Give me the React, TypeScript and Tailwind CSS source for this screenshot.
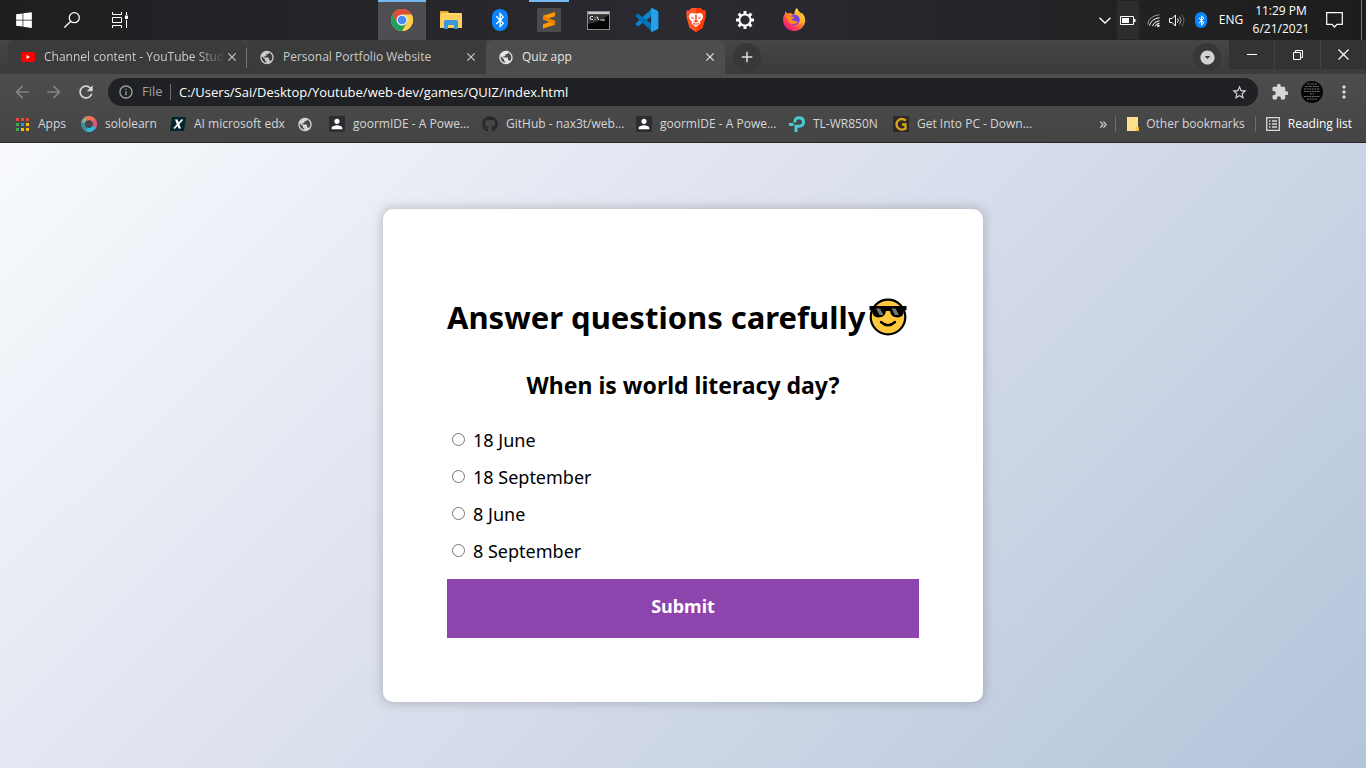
import type { ReactNode } from 'react';
import { FaBluetoothB, FaGithub, FaWindows } from 'react-icons/fa';
import {
  MdAdd,
  MdArrowBack,
  MdArrowDropDownCircle,
  MdArrowForward,
  MdClose,
  MdExtension,
  MdInfoOutline,
  MdMoreVert,
  MdPerson,
  MdPublic,
  MdRefresh,
  MdStarBorder,
} from 'react-icons/md';

const ChromeIcon = () => (
  <svg width="22" height="22" viewBox="0 0 48 48">
    <circle cx="24" cy="24" r="24" fill="#fbc116" />
    <path d="M24 24 L3.2 12 A24 24 0 0 1 44.8 12 Z" fill="#dd4b3e" />
    <path d="M24 12 H44.8 A24 24 0 0 1 24 48 L34.4 30 Z" fill="#fdd04a" />
    <path d="M3.2 12 A24 24 0 0 0 24 48 L34.4 30 L13.6 30 Z" fill="#1fa15d" />
    <path d="M3.2 12 L13.6 30 L24 24 V12 Z" fill="#dd4b3e" />
    <path d="M3.2 12 A24 24 0 0 0 1 30 L13.6 30 Z" fill="#1fa15d" />
    <circle cx="24" cy="24" r="12" fill="#f2f2f2" />
    <circle cx="24" cy="24" r="9.5" fill="#4c8bf5" />
  </svg>
);

const ExplorerIcon = () => (
  <svg width="22" height="20" viewBox="0 0 22 20">
    <path d="M0 1h8l1 2h13v5H0z" fill="#e9a928" />
    <path d="M1 3h20v14H1z" fill="#ffd766" />
    <path d="M0 5h22v13H0z" fill="#fbd05b" />
    <path d="M4 19v-7.500q0-1.500 1.500-1.500h11q1.500 0 1.500 1.500V19h-4v-4H8v4z" fill="#3a96dd" />
  </svg>
);

const BluetoothIcon = ({ small = false }: { small?: boolean }) => (
  <span
    className={
      small
        ? 'flex h-4 w-3 items-center justify-center rounded-md bg-[#0a84ff] text-[11px] text-white'
        : 'flex h-[22px] w-4 items-center justify-center rounded-lg bg-[#0a84ff] text-base text-white'
    }
  >
    <FaBluetoothB />
  </span>
);

const SublimeIcon = () => (
  <svg width="24" height="24" viewBox="0 0 24 24">
    <rect width="24" height="24" rx="1" fill="#4b4b4b" />
    <path d="M6 7.800 18 4v4.200L11 10.500l7 2.200v4L6 20.400v-4.200l7.500-2.400L6 11.500z" fill="#ff9800" />
    <path d="M6 11.500v-3.700l12 4.900v4z" fill="#e98200" />
  </svg>
);

const TerminalIcon = () => (
  <svg width="23" height="19" viewBox="0 0 23 19">
    <rect x=".5" y=".5" width="22" height="18" fill="#050505" stroke="#8b8b8b" />
    <rect x="1" y="1" width="21" height="2.500" fill="#c9c9c9" />
    <path d="M1 13 Q13 11 22 4 V3.500H1z" fill="#333" />
    <path d="M6 5.500H4.500Q3 5.500 3 7t1.500 1.500H6M8 6v.8M8 8v.8M10 5.500l1.500 3.500M13.500 9H18" stroke="#fff" fill="none" />
  </svg>
);

const CodeIcon = () => (
  <svg width="24" height="24" viewBox="0 0 24 24">
    <path d="M17.200.3 1 15.200q-.8.8 0 1.500l1.300 1.200q.7.500 1.400 0L23 3.200z" fill="#0d86d0" />
    <path d="M17.200 23.700 1 8.800q-.8-.8 0-1.500l1.300-1.200q.7-.5 1.400 0L23 20.800z" fill="#0072ba" />
    <path d="m17.200.2 5.300 2.500q.9.500.9 1.500v15.600q0 1-.9 1.500l-5.300 2.500q-1.100.4-1.100-.8V1q0-1.200 1.100-.8z" fill="#25a0ee" />
  </svg>
);

const BraveIcon = () => (
  <svg width="20" height="24" viewBox="0 0 20 24">
    <path d="M5.500 0h9L17 2.500l2-.2L20 5l-.7 2 .4 1.500L16.500 20 10 24 3.500 20 .3 8.500.7 7 0 5l1-2.700 2 .2z" fill="#fb542b" />
    <path d="M10 0h4.500L17 2.500l2-.2L20 5l-.7 2 .4 1.500L16.500 20 10 24z" fill="#ff3a05" />
    <path d="M4 5.500 7 5l3 .7 3-.7 3 .5 1.200 3.500-1.500 3-1.700 1.500.5 1.800L10 19l-4.500-3.700.5-1.800-1.700-1.500-1.500-3z" fill="#fff" />
    <path d="m4.500 8.700 3.300 1-.5 1.700zM15.500 8.700l-3.300 1 .5 1.700zM9 7h2l-.4 5 2 1.200-2.600 1.300-2.600-1.300 2-1.200zM6.500 14.500l3.500 1.200 3.500-1.200-1 1.800-2.500.5-2.500-.5z" fill="#fb4a20" />
  </svg>
);

const GearIcon = () => (
  <svg width="18" height="18" viewBox="0 0 18 18" fill="none" stroke="#fff">
    <circle cx="9" cy="9" r="5.600" strokeWidth="2" />
    <g strokeWidth="3">
      <path d="M9 0v3M9 15v3M0 9h3M15 9h3M2.600 2.600l2.200 2.200M13.200 13.200l2.200 2.200M2.600 15.400l2.200-2.200M13.200 4.800l2.200-2.200" />
    </g>
  </svg>
);

const FirefoxIcon = () => (
  <svg width="24" height="24" viewBox="0 0 24 24">
    <defs>
      <linearGradient id="fox" x1=".85" y1=".1" x2=".2" y2=".95">
        <stop offset="0" stopColor="#fff04a" />
        <stop offset=".4" stopColor="#ff9a2b" />
        <stop offset=".7" stopColor="#ff4550" />
        <stop offset="1" stopColor="#e31587" />
      </linearGradient>
    </defs>
    <path d="M15 0q1 3 4 5.200Q20 6 20 4.800q3.300 3.800 3.300 8.200A11.200 11.200 0 0 1 1 13Q.8 8 3 5.400L3.300 3l2 2.500L8.500 5l1-.8L9.200 6l3.300.2Q12 2.500 15 0z" fill="url(#fox)" />
    <circle cx="12.500" cy="11.800" r="5.200" fill="#7542e5" />
    <path d="M3.500 9q3-2.500 6-.5l3 .5q0 1.500-2.800 2 .8 2.500 3.800 2 2 0 2.500.5-1.500 2.500-4.500 2.500Q6 16 5.500 10z" fill="#ff8a1e" />
    <path d="M12.500 6.200q4 0 5.500 3.500 1 4-2 6.800 6-1 4.700-7.500Q19 5 15 3.500z" fill="#ffb52e" />
  </svg>
);

const TaskViewIcon = () => (
  <svg width="18" height="16" viewBox="0 0 18 16" fill="none" stroke="#fff">
    <path d="M1.500 0v2.500h9V0M1.500 16v-2.500h9V16M1.500 5.500h9v5h-9zM15.500 0v3M15.500 8v8" />
    <path d="M14 3.500h3v3.500h-3z" fill="#fff" stroke="none" />
  </svg>
);

const taskIcons: { name: string; icon: ReactNode; state?: 'active' | 'open' }[] = [
  { name: 'Chrome', icon: <ChromeIcon />, state: 'active' },
  { name: 'File Explorer', icon: <ExplorerIcon /> },
  { name: 'Bluetooth', icon: <BluetoothIcon /> },
  { name: 'Sublime Text', icon: <SublimeIcon />, state: 'open' },
  { name: 'Command Prompt', icon: <TerminalIcon /> },
  { name: 'Visual Studio Code', icon: <CodeIcon /> },
  { name: 'Brave', icon: <BraveIcon /> },
  { name: 'Settings', icon: <GearIcon /> },
  { name: 'Firefox', icon: <FirefoxIcon /> },
];

function Taskbar() {
  return (
    <header className="flex h-10 items-stretch bg-linear-to-r from-[#1d1f20] via-[#2b2a31] to-[#1d1d1d] text-white">
      <div className="flex w-[378px]">
        <button aria-label="Start" className="flex w-12 items-center justify-center">
          <FaWindows size={18} />
        </button>
        <button aria-label="Search" className="flex w-12 items-center justify-center">
          <svg width="16" height="16" viewBox="0 0 16 16" fill="none" stroke="#fff" strokeWidth="1.300">
            <circle cx="10.300" cy="5.700" r="5" />
            <path d="M6.800 9.200.4 15.600" />
          </svg>
        </button>
        <button aria-label="Task view" className="flex w-12 items-center justify-center">
          <TaskViewIcon />
        </button>
      </div>
      <nav aria-label="Pinned apps" className="flex gap-px">
        {taskIcons.map(({ name, icon, state }) => (
          <button
            key={name}
            aria-label={name}
            className={
              state === 'active'
                ? 'flex w-12 items-center justify-center border-t-2 border-[#76b9ed] bg-[#4d4d52] pb-0.5'
                : 'relative flex w-12 items-center justify-center'
            }
          >
            {icon}
            {state === 'open' && <span className="absolute inset-x-1 top-0 h-0.5 bg-[#76b9ed]" />}
          </button>
        ))}
      </nav>
      <div className="flex flex-1 items-center justify-end text-xs">
        <button aria-label="Show hidden icons" className="flex w-6 justify-center">
          <svg width="12" height="7" viewBox="0 0 12 7" fill="none" stroke="#fff" strokeWidth="1.300">
            <path d="m.5.700 5.500 5.300L11.500.700" />
          </svg>
        </button>
        <span className="flex h-[38px] w-[22px] items-center justify-center bg-[#2d2d2d]">
          <svg width="16" height="9" viewBox="0 0 16 9" fill="none" stroke="#fff">
            <path d="M.5.500h13v8H.5z" />
            <path d="M2 2h7v5H2zM14 3h1.500v3H14z" fill="#fff" stroke="none" />
          </svg>
        </span>
        <span className="flex w-7 justify-center">
          <svg width="13" height="13" viewBox="0 0 13 13" fill="none" stroke="#fff">
            <path d="M.5 10.500Q2 2 12.500.700" stroke="#999" />
            <path d="M2.500 11.500Q4 5 12.500 3.700M5.300 12Q7 7.500 12.500 6.700M8 12.500q1-3 4.500-3.300" />
            <circle cx="11.300" cy="11.700" r="1.300" fill="#fff" stroke="none" />
          </svg>
        </span>
        <span className="flex w-5 justify-center">
          <svg width="16" height="13" viewBox="0 0 16 13" fill="none" stroke="#fff">
            <path d="M.5 4.500H3L6.500 1v11L3 8.500H.5zM8.500 4.500q1.500 2 0 4" />
            <path d="M10.500 2.500q3 4 0 8" stroke="#aaa" />
            <path d="M12.700.700q4.500 5.800 0 11.600" stroke="#666" />
          </svg>
        </span>
        <span className="flex w-7 justify-center">
          <BluetoothIcon small />
        </span>
        <span className="w-8 text-center">ENG</span>
        <time className="flex w-[68px] flex-col items-center text-xs leading-[18px]">
          <span>11:29 PM</span>
          <span>6/21/2021</span>
        </time>
        <button aria-label="Notifications" className="flex w-[38px] justify-center">
          <svg width="17" height="16" viewBox="0 0 17 16" fill="none" stroke="#fff" strokeWidth="1.200">
            <path d="M.7.700h15.600v11.600H11L8.500 15 6 12.300H.7z" />
          </svg>
        </button>
        <span className="ml-2 mr-1 h-full w-px bg-[#777]" />
      </div>
    </header>
  );
}

const YouTubeIcon = () => (
  <svg width="14" height="10" viewBox="0 0 14 10">
    <rect width="14" height="10" rx="2" fill="#f00" />
    <path d="M5.500 3v4L9 5z" fill="#fff" />
  </svg>
);

const tabs: { title: string; icon: ReactNode; className: string }[] = [
  { title: 'Channel content - YouTube Studi', icon: <YouTubeIcon />, className: 'rounded-t-lg bg-[#3b3b3b] text-[#c9cacb]' },
  { title: 'Personal Portfolio Website', icon: <MdPublic size={17} />, className: 'rounded-b-lg bg-[#3b3b3b] text-[#c9cacb]' },
  { title: 'Quiz app', icon: <MdPublic size={17} />, className: 'rounded-t-lg bg-[#4d4d4d] text-[#e6e6e6]' },
];

function TabStrip() {
  return (
    <div className="flex h-[34px] bg-linear-to-b from-[#464646] to-[#3b3b3b] pl-2">
      {tabs.map(({ title, icon, className }, i) => (
        <div key={title} className={`relative flex w-[239px] min-w-0 items-center pl-3 pr-2 ${className}`}>
          <span className="flex w-4 justify-center">{icon}</span>
          <a
            href="#quiz"
            className={
              i === 0
                ? 'ml-2 min-w-0 flex-1 whitespace-nowrap mask-r-from-85% text-xs leading-5'
                : 'ml-2 min-w-0 flex-1 whitespace-nowrap text-xs leading-5'
            }
          >
            {title}
          </a>
          <button aria-label={`Close ${title}`}>
            <MdClose size={14} />
          </button>
          {i === 0 && <span className="absolute right-0 top-2 h-5 w-px bg-[#777]" />}
        </div>
      ))}
      <button
        aria-label="New tab"
        className="ml-2 mt-[3px] flex size-7 items-center justify-center rounded-full bg-[#383838] text-[#dedede]"
      >
        <MdAdd size={18} />
      </button>
      <div className="flex flex-1 items-start justify-end">
        <button
          aria-label="Search tabs"
          className="mr-2 mt-[3px] flex size-7 items-center justify-center rounded-full bg-[#383838] text-[#d2d2d2]"
        >
          <MdArrowDropDownCircle size={17} />
        </button>
        <div className="flex gap-px bg-[#414141]">
          <button aria-label="Minimize" className="flex h-[29px] w-[45px] items-center justify-center bg-[#333]">
            <svg width="10" height="2" viewBox="0 0 10 2">
              <path d="M0 .5h10" stroke="#fff" />
            </svg>
          </button>
          <button aria-label="Restore" className="flex h-[29px] w-[45px] items-center justify-center bg-[#333]">
            <svg width="10" height="10" viewBox="0 0 10 10" fill="none" stroke="#fff">
              <path d="M.5 2.500h7v7h-7zM2.500 2.500v-2h7v7h-2" />
            </svg>
          </button>
          <button aria-label="Close" className="flex h-[29px] w-[45px] items-center justify-center bg-[#333]">
            <svg width="11" height="11" viewBox="0 0 11 11" fill="none" stroke="#fff" strokeWidth="1.200">
              <path d="m.5.500 10 10M10.500.500l-10 10" />
            </svg>
          </button>
        </div>
      </div>
    </div>
  );
}

function AddressBar() {
  return (
    <div className="flex h-9 items-center px-1.5 text-[#d8d8d8]">
      <button aria-label="Back" className="flex w-8 justify-center text-[#838383]">
        <MdArrowBack size={20} />
      </button>
      <button aria-label="Forward" className="flex w-8 justify-center text-[#838383]">
        <MdArrowForward size={20} />
      </button>
      <button aria-label="Reload" className="flex w-8 justify-center">
        <MdRefresh size={20} />
      </button>
      <div className="mx-1.5 flex h-7 min-w-0 flex-1 items-center rounded-full bg-[#202124] pl-2.5 pr-2.5">
        <MdInfoOutline size={16} className="text-[#9aa0a6]" />
        <span className="ml-2 w-6 text-[13px] text-[#9aa0a6]">File</span>
        <span className="mx-1 h-4 w-px bg-[#6b6d70]" />
        <input
          aria-label="Address"
          defaultValue="C:/Users/Sai/Desktop/Youtube/web-dev/games/QUIZ/index.html"
          className="ml-1 min-w-0 flex-1 bg-transparent pt-px text-[13px] text-white outline-none"
        />
        <button aria-label="Bookmark this page">
          <MdStarBorder size={17} />
        </button>
      </div>
      <button aria-label="Extensions" className="flex w-8 justify-center">
        <MdExtension size={18} />
      </button>
      <button aria-label="Profile" className="flex w-8 justify-center">
        <svg width="22" height="22" viewBox="0 0 22 22">
          <circle cx="11" cy="11" r="11" fill="#050505" />
          <path d="M6 3h10M4 5.500h14M3 8h16M3 10.500h16M9 13h4M3 15.500h16M6 18h10" stroke="#888" strokeWidth=".8" strokeDasharray="2 .6" />
        </svg>
      </button>
      <button aria-label="Menu" className="flex w-8 justify-center">
        <MdMoreVert size={20} />
      </button>
    </div>
  );
}

const appDots = ['#f44336', '#f44336', '#f44336', '#34a853', '#4285f4', '#fbbc04', '#34a853', '#fbbc04', '#fbbc04'];

const AppsIcon = () => (
  <svg width="13" height="13" viewBox="0 0 13 13">
    {appDots.map((fill, i) => (
      <rect key={i} x={(i % 3) * 5} y={Math.floor(i / 3) * 5} width="3" height="3" fill={fill} />
    ))}
  </svg>
);

const SololearnIcon = () => (
  <svg width="16" height="16" viewBox="0 0 16 16" fill="none" strokeWidth="4">
    <path d="M2 8a6 6 0 0 1 6-6" stroke="#8fb08c" />
    <path d="M5 2.800A6 6 0 0 1 13.200 5" stroke="#ee7355" />
    <path d="M12.500 4A6 6 0 0 1 13 11.300" stroke="#d9577c" />
    <path d="M13.300 10.800A6 6 0 0 1 5 13.200" stroke="#35b5d8" />
    <path d="M6 13.700A6 6 0 0 1 2.200 6.500" stroke="#3c8fa0" />
  </svg>
);

const EdxIcon = () => (
  <svg width="16" height="14" viewBox="0 0 16 14">
    <path d="M2 0h14l-2 14H0z" fill="#03262c" />
    <path d="M5 2.500h2.500L11 11.500H8.500z" fill="#fff" />
    <path d="M12.500 2.500 4 11.500" stroke="#fff" strokeWidth="1.800" />
  </svg>
);

const PersonIcon = () => (
  <span className="flex size-4 items-center justify-center bg-[#2c2d33] text-white">
    <MdPerson size={16} />
  </span>
);

const RouterIcon = () => (
  <svg width="16" height="16" viewBox="0 0 16 16" fill="none" stroke="#4acbd6" strokeWidth="3">
    <path d="M0 8.500h4.500M6 6.500Q5.500 1.700 10 1.700t4.500 4.300-4.500 4.300H7v5.700" />
  </svg>
);

const GIcon = () => (
  <svg width="16" height="16" viewBox="0 0 16 16">
    <rect width="16" height="16" fill="#2d2a26" />
    <path d="M13 4.500Q8.500 1.500 5 4.500q-3 4 0 7.500 3.500 3 7.500.500v-4H9" fill="none" stroke="#dca321" strokeWidth="2.300" />
  </svg>
);

const bookmarks: { label: string; icon: ReactNode; width: string }[] = [
  { label: 'Apps', icon: <AppsIcon />, width: 'w-[67px]' },
  { label: 'sololearn', icon: <SololearnIcon />, width: 'w-[89px]' },
  { label: 'AI microsoft edx', icon: <EdxIcon />, width: 'w-[127px]' },
  { label: '', icon: <MdPublic size={17} />, width: 'w-8' },
  { label: 'goormIDE - A Powe...', icon: <PersonIcon />, width: 'w-[153px]' },
  { label: 'GitHub - nax3t/web...', icon: <FaGithub size={16} color="#24292e" />, width: 'w-[154px]' },
  { label: 'goormIDE - A Powe...', icon: <PersonIcon />, width: 'w-[153px]' },
  { label: 'TL-WR850N', icon: <RouterIcon />, width: 'w-[104px]' },
  { label: 'Get Into PC - Down...', icon: <GIcon />, width: 'w-[152px]' },
];

function BookmarksBar() {
  return (
    <nav aria-label="Bookmarks" className="flex h-8 items-center pb-1 pl-3.5 pr-3.5 text-xs text-[#d5d6d8]">
      {bookmarks.map(({ label, icon, width }, i) => (
        <a
          key={i}
          href="#quiz"
          aria-label={label || 'Website'}
          className={`flex shrink-0 items-center gap-2 whitespace-nowrap ${width}`}
        >
          <span className="flex w-4 justify-center">{icon}</span>
          {label}
        </a>
      ))}
      <button aria-label="More bookmarks" className="ml-auto pb-0.5 text-base leading-4">
        »
      </button>
      <span className="ml-2 mr-2.5 h-4 w-px bg-[#6d6d6d]" />
      <a href="#quiz" className="flex items-center gap-1.5 whitespace-nowrap">
        <svg width="14" height="14" viewBox="0 0 14 14">
          <path d="M1 0h11v10l1 4H1z" fill="#ffe08a" />
          <path d="M10 10h3v4h-3z" fill="#f5c542" />
        </svg>
        Other bookmarks
      </a>
      <span className="mx-2.5 h-4 w-px bg-[#6d6d6d]" />
      <button className="flex items-center gap-2 whitespace-nowrap text-white">
        <svg width="14" height="14" viewBox="0 0 14 14" fill="none" stroke="#d8d8d8" strokeWidth="1.300">
          <path d="M.700.700h12.600v12.600H.700zM3 4h1.500M6 4h5M3 7h1.500M6 7h5M3 10h1.500M6 10h5" />
        </svg>
        Reading list
      </button>
    </nav>
  );
}

const SunglassesEmoji = () => (
  <svg role="img" aria-label="smiling face with sunglasses" width="38" height="38" viewBox="0 0 38 38">
    <circle cx="19" cy="19" r="17.300" fill="#ffc83d" stroke="#000" strokeWidth="2.200" />
    <path d="M.5 8h37v4l-2.500.5q-.5 7-6.500 7-6.500 0-7.500-6.500h-4Q16 19.500 9.500 19.500 3.500 19.500 3 12.500L.5 12z" fill="#000" />
    <path d="M7 10.500h4l3.500 6.500h-4zM22.500 10.500h4L30 17h-4z" fill="#767676" />
    <path d="M12 24q7 6.500 14 0" fill="none" stroke="#000" strokeWidth="2.400" strokeLinecap="round" />
  </svg>
);

const answers = ['18 June', '18 September', '8 June', '8 September'];

function Quiz() {
  return (
    <main
      id="quiz"
      className="flex flex-1 items-center justify-center bg-linear-135 from-[#f8fafd] via-[#dfe3ef] via-40% to-[#b4c4da] font-['Noto_Sans',sans-serif] text-black"
    >
      <form
        className="w-[600px] rounded-[10px] bg-white p-16 shadow-[0_0_10px_2px_rgba(100,100,100,0.3)]"
        onSubmit={(e) => e.preventDefault()}
      >
        <h1 className="mt-5 flex items-center gap-1 whitespace-nowrap text-[31px] font-bold leading-[48px]">
          Answer questions carefully
          <SunglassesEmoji />
        </h1>
        <fieldset>
          <legend className="w-full pt-6 text-center text-[23px] font-bold leading-10">When is world literacy day?</legend>
          <div className="mt-4">
            {answers.map((answer) => (
              <label key={answer} className="flex h-[37px] items-center gap-2 pl-[5px] text-lg">
                <input type="radio" name="answer" className="size-[13px]" />
                {answer}
              </label>
            ))}
          </div>
        </fieldset>
        <button className="mt-2.5 h-[59px] w-full bg-[#8e44ad] pb-1.5 text-lg font-bold text-white">Submit</button>
      </form>
    </main>
  );
}

export default function App() {
  return (
    <div className="flex min-h-screen flex-col font-['Open_Sans',sans-serif]">
      <Taskbar />
      <TabStrip />
      <div className="border-b border-[#2b2525] bg-linear-to-b from-[#4d4d4d] to-[#444]">
        <AddressBar />
        <BookmarksBar />
      </div>
      <Quiz />
    </div>
  );
}
